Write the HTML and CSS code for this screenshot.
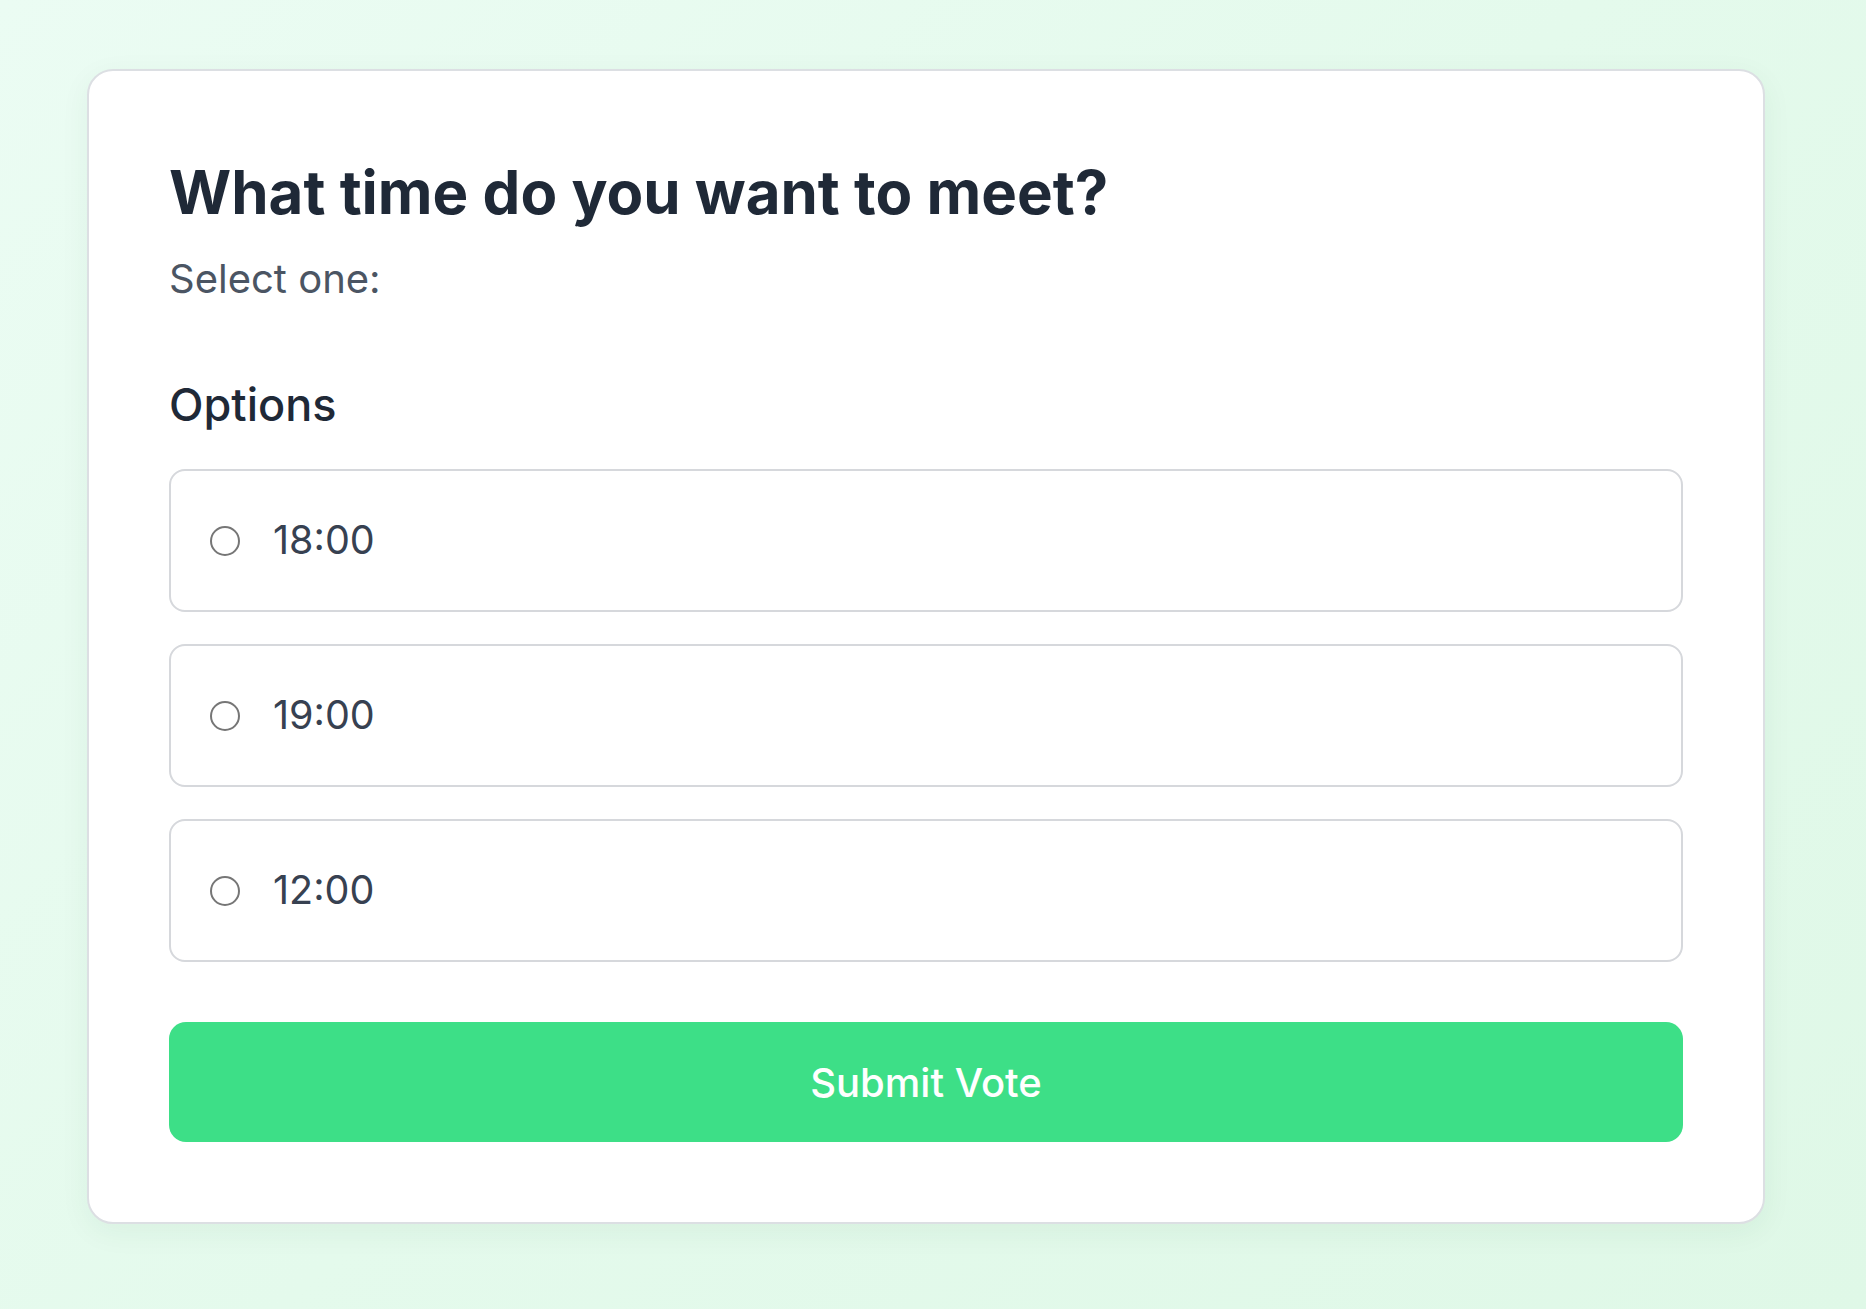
FILE: index.html
```html
<!DOCTYPE html>
<html>
<head>
  <title>Poll</title>
  <link rel="stylesheet" href="styles.css">
</head>
<body>
  <div class="page">
    <form class="poll-card" id="pollForm">
      <h1 class="poll-title">What time do you want to meet?</h1>
      <p class="poll-hint">Select one:</p>
      <h2 class="options-title">Options</h2>
      <div class="options">
        <label class="option" for="opt1">
          <input type="radio" id="opt1" name="time" value="18:00">
          <span class="option-text">18:00</span>
        </label>
        <label class="option" for="opt2">
          <input type="radio" id="opt2" name="time" value="19:00">
          <span class="option-text">19:00</span>
        </label>
        <label class="option" for="opt3">
          <input type="radio" id="opt3" name="time" value="12:00">
          <span class="option-text">12:00</span>
        </label>
      </div>
      <button type="button" class="submit-btn" id="submitBtn">Submit Vote</button>
    </form>
  </div>
</body>
</html>
```

FILE: styles.css
```css
html,
body {
  margin: 0;
  height: 100%;
}
body {
  font-family: Inter, "Noto Sans", sans-serif;
  background: linear-gradient(135deg, #ebfcf3 0%, #e4faec 50%, #dff8e7 100%);
  min-height: 1309px;
}
.page {
  padding: 69px 0 0 87px;
}
.poll-card {
  box-sizing: border-box;
  width: 1678px;
  padding: 80px 80px 80px;
  background-color: #ffffff;
  border: 2px solid #dcdfe3;
  border-radius: 26px;
  box-shadow: 0 8px 30px rgba(30, 80, 50, 0.06);
}
.poll-title {
  margin: 0;
  font-size: 60px;
  line-height: 82px;
  font-weight: 700;
  color: #1f2937;
}
.poll-hint {
  margin: 17px 0 0;
  font-size: 40px;
  line-height: 57px;
  color: #4b5563;
}
.options-title {
  margin: 67px 0 0;
  font-size: 45px;
  line-height: 62px;
  font-weight: 500;
  color: #1f2937;
}
.options {
  display: flex;
  flex-direction: column;
  gap: 32px;
  margin-top: 33px;
}
.option {
  box-sizing: border-box;
  display: flex;
  align-items: center;
  gap: 33px;
  height: 143px;
  padding: 0 39px;
  border: 2px solid #d6d8dc;
  border-radius: 16px;
  cursor: pointer;
}
.option input[type="radio"] {
  appearance: none;
  -webkit-appearance: none;
  box-sizing: border-box;
  width: 30px;
  height: 30px;
  margin: 0;
  border: 2px solid #767676;
  border-radius: 50%;
  background-color: #ffffff;
}
.option input[type="radio"]:checked {
  border: 9px solid #3ddf87;
}
.option-text {
  font-size: 39.5px;
  line-height: 1;
  color: #374151;
}
.submit-btn {
  display: block;
  width: 100%;
  height: 120px;
  margin-top: 60px;
  background-color: #3ddf87;
  color: #ffffff;
  border: none;
  border-radius: 17px;
  font-family: Inter, "Noto Sans", sans-serif;
  font-size: 40px;
  font-weight: 500;
  cursor: pointer;
}
.submit-btn:hover {
  background-color: #34d17c;
}
```
